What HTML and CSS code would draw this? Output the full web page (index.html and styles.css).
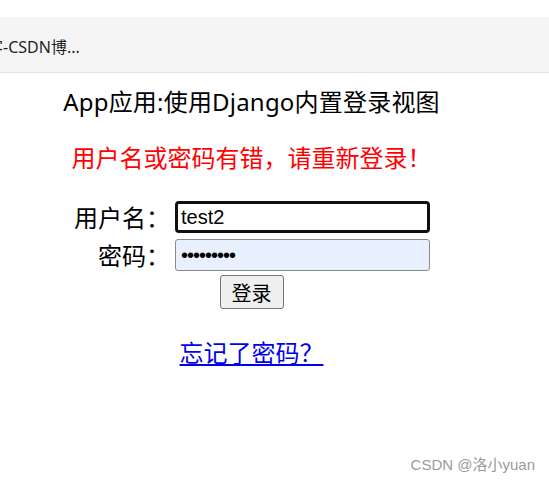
FILE: index.html
```html
<!DOCTYPE html>
<html lang="zh-CN">
<head>
    <meta charset="UTF-8">
    <meta name="viewport" content="width=device-width, initial-scale=1.0">
    <title>登录</title>
    <link rel="stylesheet" href="styles.css">
</head>
<body>
    <div class="tab-strip">
        <div class="tab-bar">
            <span class="tab-title"><span class="tab-cut">客</span>-CSDN博...</span>
        </div>
    </div>

    <div class="page">
        <h1 class="app-title">App应用:使用Django内置登录视图</h1>
        <p class="error-msg">用户名或密码有错，请重新登录！</p>

        <form class="login-form" onsubmit="return false;">
            <label class="field-label" for="username">用户名：</label>
            <input class="field-input is-focus" type="text" id="username" value="test2">
            <label class="field-label" for="password">密码：</label>
            <input class="field-input is-filled" type="password" id="password" value="123456789">
            <div class="form-actions">
                <button class="login-btn" type="submit">登录</button>
            </div>
        </form>

        <p class="forgot"><a href="#">忘记了密码？</a></p>
    </div>

    <div class="watermark">CSDN @洛小yuan</div>
</body>
</html>
```

FILE: styles.css
```css
body {
    margin: 0;
    font-family: "Noto Sans", "Noto Sans CJK SC", sans-serif;
    background-color: #fff;
    color: #000;
    min-height: 482px;
    position: relative;
}

.tab-strip {
    padding-top: 17px;
}
.tab-bar {
    height: 55px;
    background-color: #f5f5f5;
    border-bottom: 1px solid #e3e3e3;
    display: flex;
    align-items: center;
    overflow: hidden;
}
.tab-title {
    font-size: 16px;
    color: #1f1f1f;
    white-space: nowrap;
    margin-left: -13px;
    padding-top: 2px;
}
.tab-cut {
    font-family: "Noto Sans CJK SC", sans-serif;
}

.page {
    width: 503px;
    text-align: center;
    padding-top: 13px;
}

.app-title {
    font-size: 24px;
    font-weight: normal;
    line-height: 32px;
    margin: 0;
    letter-spacing: 0.2px;
}

.error-msg {
    color: #ff0000;
    font-size: 24px;
    line-height: 32px;
    margin: 24px 0 0;
}

.login-form {
    display: grid;
    grid-template-columns: 99px 255px;
    column-gap: 3px;
    row-gap: 6px;
    justify-content: center;
    align-items: center;
    margin-top: 27px;
}
.field-label {
    font-size: 24px;
    line-height: 32px;
    text-align: right;
    white-space: nowrap;
    padding-right: 2px;
    font-family: "Noto Sans CJK SC", sans-serif;
}
.field-input {
    box-sizing: border-box;
    width: 255px;
    height: 32px;
    margin: 0;
    padding: 0 5px;
    font-family: "Liberation Sans", "Noto Sans CJK SC", sans-serif;
    font-size: 20px;
    color: #000;
    border: 1px solid #8a8a8a;
    border-radius: 3px;
    outline: none;
}
.field-input.is-focus {
    border: 3px solid #101010;
    border-radius: 4px;
    padding: 0 3px;
}
.field-input.is-filled {
    background-color: #e8f0fe;
    letter-spacing: -1px;
}
.form-actions {
    grid-column: 1 / 3;
    text-align: center;
    margin-top: -2px;
}
.login-btn {
    box-sizing: border-box;
    width: 64px;
    height: 34px;
    font-family: "Noto Sans CJK SC", sans-serif;
    font-size: 20px;
    padding: 0;
    background-color: #efefef;
    border: 1px solid #767676;
    border-radius: 3px;
    color: #000;
}

.forgot {
    font-size: 24px;
    line-height: 32px;
    margin: 27px 0 0;
    font-family: "Noto Sans CJK SC", sans-serif;
}
.forgot a {
    color: #0000ee;
}

.watermark {
    position: absolute;
    right: 14px;
    top: 453px;
    font-size: 15px;
    color: #9b9b9b;
    font-family: "Liberation Sans", "Noto Sans CJK SC", sans-serif;
}
```
